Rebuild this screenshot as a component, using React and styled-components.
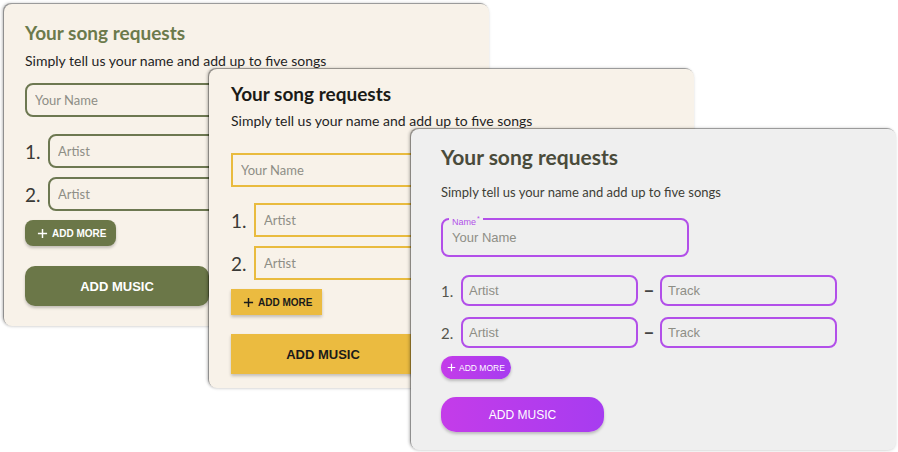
import styled, {createGlobalStyle} from "styled-components";

const GlobalStyle = createGlobalStyle`
  html, body {
    margin: 0;
    padding: 0;
    background: #ffffff;
  }
  * {
    box-sizing: border-box;
  }
`;

const THEMES = {
  olive: {
    left: 4,
    top: 4,
    height: 322,
    bg: "#f8f2e9",
    pad: "17px 21px",
    subMargin: "7px 0 13px",
    songsMargin: "17px 0 9px",
    title: "#6b7a4c",
    titleSize: 19,
    subSize: 14,
    sub: "#1f1f1f",
    border: "#6d7851",
    radius: 8,
    inputH: 34,
    nameW: 330,
    artistW: 310,
    btn: "#6b7748",
    btnText: "#ffffff",
    btnWeight: 700,
    submitGap: 20,
  },
  mustard: {
    left: 209,
    top: 69,
    height: 319,
    bg: "#f8f2e9",
    pad: "13px 22px",
    subMargin: "6px 0 23px",
    songsMargin: "16px 0 9px",
    title: "#1b1b17",
    titleSize: 19,
    subSize: 14,
    sub: "#1f1f1f",
    border: "#e9bb3e",
    radius: 0,
    inputH: 34,
    nameW: 330,
    artistW: 310,
    btn: "#ebbb40",
    btnText: "#1a1a1a",
    btnWeight: 700,
    submitGap: 19,
  },
  violet: {
    left: 411,
    top: 129,
    height: 321,
    bg: "#efefef",
    pad: "16px 30px",
    subMargin: "14px 0 17px",
    songsMargin: "18px 0 8px",
    title: "#4a4b3b",
    titleSize: 21,
    subSize: 13,
    sub: "#3e3e36",
    border: "#b24fe9",
    radius: 8,
    inputH: 31,
    nameW: 248,
    artistW: 177,
    btn: "linear-gradient(90deg, #c43ce9 0%, #a73cf0 100%)",
    btnText: "#ffffff",
    btnWeight: 400,
    submitGap: 18,
  },
};

const Stage = styled.div`
  position: relative;
  width: 898px;
  height: 452px;
  overflow: hidden;
  background: #ffffff;
  font-family: Lato, "Noto Sans", sans-serif;
`;

const Card = styled.section`
  position: absolute;
  left: ${(p) => p.$t.left}px;
  top: ${(p) => p.$t.top}px;
  width: 485px;
  height: ${(p) => p.$t.height}px;
  padding: ${(p) => p.$t.pad};
  display: flex;
  flex-direction: column;
  align-items: flex-start;
  background: ${(p) => p.$t.bg};
  border-radius: 8px;
  box-shadow: -1px -1px 0 rgba(0, 0, 0, 0.28), -2px -1px 3px rgba(0, 0, 0, 0.22),
    0 1px 3px rgba(0, 0, 0, 0.12);
`;

const Title = styled.h2`
  margin: 0;
  font-size: ${(p) => p.$t.titleSize}px;
  line-height: 24px;
  font-weight: 700;
  color: ${(p) => p.$t.title};
`;

const Subtitle = styled.p`
  margin: ${(p) => p.$t.subMargin};
  font-size: ${(p) => p.$t.subSize}px;
  line-height: 18px;
  color: ${(p) => p.$t.sub};
`;

const Input = styled.input`
  width: ${(p) => p.$w}px;
  height: ${(p) => p.$t.inputH}px;
  padding: 0 ${(p) => (p.$violet ? 6 : 8)}px;
  border: 2px solid ${(p) => p.$t.border};
  border-radius: ${(p) => p.$t.radius}px;
  background: transparent;
  font-family: ${(p) => (p.$violet ? '"Liberation Sans", Arial' : "Lato")}, sans-serif;
  font-size: 13px;
  outline: none;

  &::placeholder {
    color: #8e8e86;
  }
`;

const NameBox = styled.label`
  position: relative;
  display: flex;
  align-items: center;
  width: 248px;
  height: 39px;
  padding: 0 9px;
  border: 2px solid #b24fe9;
  border-radius: 8px;
`;

const FloatLabel = styled.span`
  position: absolute;
  top: -7px;
  left: 6px;
  padding: 0 3px;
  background: #efefef;
  font-family: "Liberation Sans", Arial, sans-serif;
  font-size: 9px;
  line-height: 11px;
  color: #b24fe9;

  & sup {
    font-size: 7px;
    margin-left: 1px;
  }
`;

const BareInput = styled.input`
  width: 100%;
  border: 0;
  padding: 0;
  background: transparent;
  font-family: "Liberation Sans", Arial, sans-serif;
  font-size: 13px;
  outline: none;

  &::placeholder {
    color: #8e8e86;
  }
`;

const Songs = styled.ol`
  list-style: none;
  margin: ${(p) => p.$t.songsMargin};
  padding: 0;
  display: flex;
  flex-direction: column;
  gap: ${(p) => (p.$violet ? 11 : 9)}px;
`;

const Song = styled.li`
  display: flex;
  align-items: center;
`;

const Num = styled.span`
  width: ${(p) => (p.$violet ? 20 : 23)}px;
  font-size: ${(p) => (p.$violet ? 15 : 19)}px;
  color: ${(p) => (p.$violet ? "#55554c" : "#3a3a36")};
`;

const Dash = styled.span`
  width: 22px;
  text-align: center;
  font-family: "Liberation Sans", Arial, sans-serif;
  font-size: 16px;
  font-weight: 700;
  color: #444;
`;

const Button = styled.button`
  border: 0;
  cursor: pointer;
  display: inline-flex;
  align-items: center;
  justify-content: center;
  background: ${(p) => p.$t.btn};
  color: ${(p) => p.$t.btnText};
  font-family: "Liberation Sans", Arial, sans-serif;
  font-weight: ${(p) => p.$t.btnWeight};
  text-transform: uppercase;
  box-shadow: 0 2px 3px rgba(0, 0, 0, 0.22);
`;

const MoreButton = styled(Button)`
  gap: ${(p) => (p.$violet ? 3 : 4)}px;
  height: ${(p) => (p.$violet ? 23 : 26)}px;
  padding: 0 ${(p) => (p.$violet ? 6 : 10)}px 0 ${(p) => (p.$violet ? 6 : 12)}px;
  border-radius: ${(p) => (p.$violet ? 12 : p.$t.radius)}px;
  font-size: ${(p) => (p.$violet ? 8.5 : 10)}px;

  & svg {
    width: ${(p) => (p.$violet ? 9 : 11)}px;
    height: ${(p) => (p.$violet ? 9 : 11)}px;
  }
`;

const SubmitButton = styled(Button)`
  margin-top: ${(p) => p.$t.submitGap}px;
  width: ${(p) => (p.$violet ? 163 : 184)}px;
  height: ${(p) => (p.$violet ? 35 : 40)}px;
  border-radius: ${(p) => (p.$violet ? 15 : p.$t.radius ? 10 : 0)}px;
  font-size: ${(p) => (p.$violet ? 12 : 13)}px;
`;

const Plus = () => (
  <svg viewBox="0 0 12 12" fill="none" stroke="currentColor" strokeWidth="1.6">
    <path d="M6 1v10M1 6h10" />
  </svg>
);

function RequestCard({variant}) {
  const t = THEMES[variant];
  const violet = variant === "violet";

  return (
    <Card $t={t}>
      <Title $t={t}>Your song requests</Title>
      <Subtitle $t={t}>Simply tell us your name and add up to five songs</Subtitle>
      {violet ? (
        <NameBox>
          <FloatLabel>
            Name<sup>*</sup>
          </FloatLabel>
          <BareInput placeholder="Your Name" />
        </NameBox>
      ) : (
        <Input $t={t} $w={t.nameW} placeholder="Your Name" />
      )}
      <Songs $t={t} $violet={violet}>
        {[1, 2].map((n) => (
          <Song key={n}>
            <Num $violet={violet}>{n}.</Num>
            <Input $t={t} $w={t.artistW} $violet={violet} placeholder="Artist" />
            {violet && (
              <>
                <Dash>–</Dash>
                <Input $t={t} $w={177} $violet placeholder="Track" />
              </>
            )}
          </Song>
        ))}
      </Songs>
      <MoreButton $t={t} $violet={violet}>
        <Plus />
        Add more
      </MoreButton>
      <SubmitButton $t={t} $violet={violet}>
        Add music
      </SubmitButton>
    </Card>
  );
}

export default function App() {
  return (
    <Stage>
      <GlobalStyle />
      <RequestCard variant="olive" />
      <RequestCard variant="mustard" />
      <RequestCard variant="violet" />
    </Stage>
  );
}
